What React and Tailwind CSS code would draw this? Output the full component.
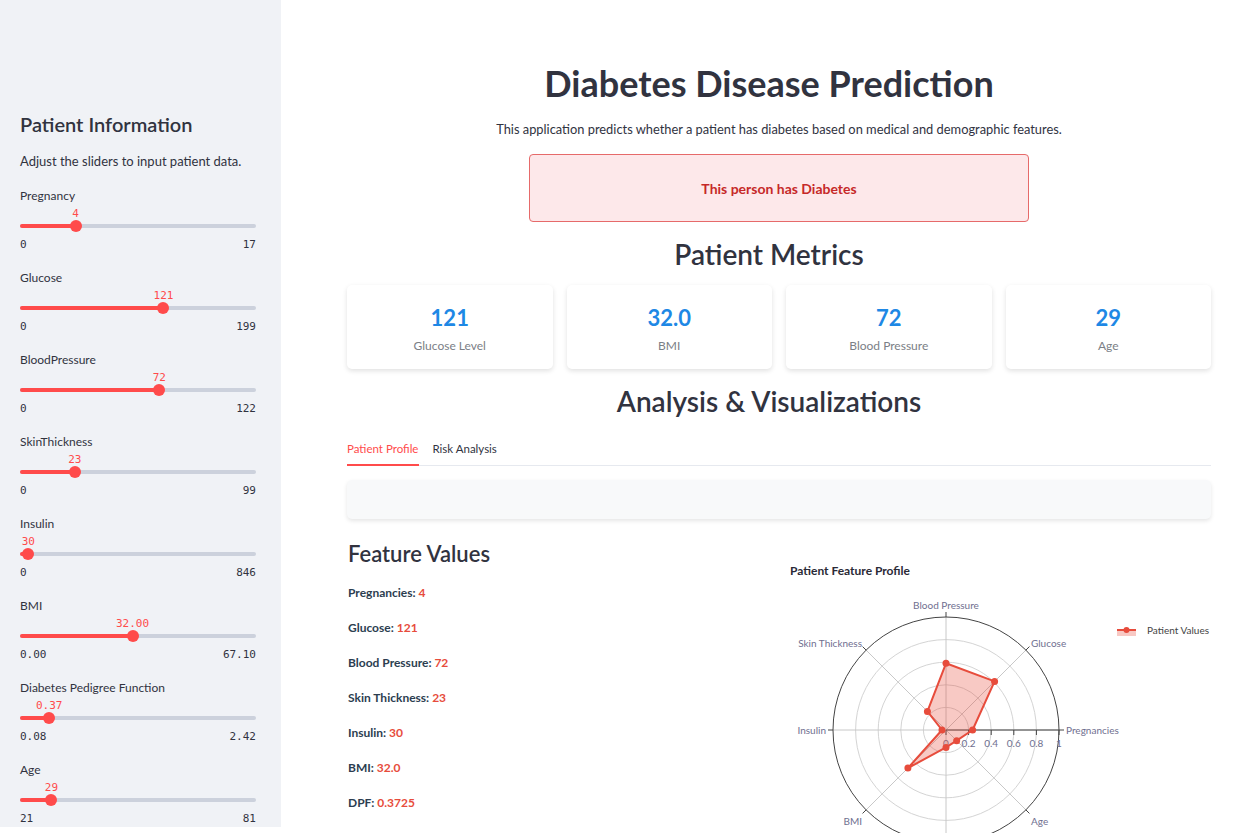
import React from "react";

const sliders = [
  { label: "Pregnancy", value: "4", min: "0", max: "17", pct: 4 / 17 },
  { label: "Glucose", value: "121", min: "0", max: "199", pct: 121 / 199 },
  { label: "BloodPressure", value: "72", min: "0", max: "122", pct: 72 / 122 },
  { label: "SkinThickness", value: "23", min: "0", max: "99", pct: 23 / 99 },
  { label: "Insulin", value: "30", min: "0", max: "846", pct: 30 / 846 },
  { label: "BMI", value: "32.00", min: "0.00", max: "67.10", pct: 32 / 67.1 },
  { label: "Diabetes Pedigree Function", value: "0.37", min: "0.08", max: "2.42", pct: 0.29 / 2.34 },
  { label: "Age", value: "29", min: "21", max: "81", pct: 8 / 60 },
];

const metrics = [
  { value: "121", label: "Glucose Level" },
  { value: "32.0", label: "BMI" },
  { value: "72", label: "Blood Pressure" },
  { value: "29", label: "Age" },
];

const features = [
  ["Pregnancies", "4"],
  ["Glucose", "121"],
  ["Blood Pressure", "72"],
  ["Skin Thickness", "23"],
  ["Insulin", "30"],
  ["BMI", "32.0"],
  ["DPF", "0.3725"],
];

const Slider = ({ label, value, min, max, pct }) => (
  <div className="mb-[16px]">
    <div className="h-[18px] text-[12px] leading-[18px] text-[#31333f]">{label}</div>
    <div className="relative h-[28px]">
      <div
        className="absolute top-[2px] -translate-x-1/2 font-['DejaVu_Sans_Mono',monospace] text-[11px] leading-[14px] text-[#ff4b4b]"
        style={{ left: `${pct * 100}%` }}
      >
        {value}
      </div>
      <div className="absolute left-0 right-0 top-[19px] h-[4px] rounded-full bg-[#ccd1dc]" />
      <div className="absolute left-0 top-[19px] h-[4px] rounded-full bg-[#ff4b4b]" style={{ width: `${pct * 100}%` }} />
      <div
        className="absolute top-[15px] h-[12px] w-[12px] -translate-x-1/2 rounded-full bg-[#ff4b4b]"
        style={{ left: `${pct * 100}%` }}
      />
    </div>
    <div className="mt-[4px] flex h-[16px] justify-between font-['DejaVu_Sans_Mono',monospace] text-[11px] leading-[16px] text-[#31333f]">
      <span>{min}</span>
      <span>{max}</span>
    </div>
  </div>
);

const RadarChart = () => {
  const cx = 160;
  const cy = 170;
  const R = 113;
  const axes = [
    { name: "Pregnancies", v: 4 / 17 },
    { name: "Glucose", v: 121 / 199 },
    { name: "Blood Pressure", v: 72 / 122 },
    { name: "Skin Thickness", v: 23 / 99 },
    { name: "Insulin", v: 30 / 846 },
    { name: "BMI", v: 32 / 67.1 },
    { name: "DPF", v: 0.3725 / 2.42 },
    { name: "Age", v: 8 / 60 },
  ];
  const pt = (i, r) => {
    const a = (i * Math.PI) / 4;
    return [cx + r * Math.cos(a), cy - r * Math.sin(a)];
  };
  const poly = axes.map((ax, i) => pt(i, ax.v * R));
  // DPF label sits below the visible area, so it is left out
  const labels = [
    { name: "Pregnancies", x: cx + R + 7, y: cy + 4, anchor: "start" },
    { name: "Glucose", x: 245, y: 87, anchor: "start" },
    { name: "Blood Pressure", x: cx, y: cy - R - 8, anchor: "middle" },
    { name: "Skin Thickness", x: 76, y: 87, anchor: "end" },
    { name: "Insulin", x: cx - R - 7, y: cy + 4, anchor: "end" },
    { name: "BMI", x: 76, y: 265, anchor: "end" },
    { name: "Age", x: 245, y: 265, anchor: "start" },
  ];

  return (
    <svg width="425" height="273" className="block font-['Lato',sans-serif]">
      <text x="4" y="15" fontSize="12" fontWeight="700" fill="#2a2a36">
        Patient Feature Profile
      </text>
      {[0.2, 0.4, 0.6, 0.8].map((t) => (
        <circle key={t} cx={cx} cy={cy} r={t * R} fill="none" stroke="#d4d4d4" strokeWidth="1" />
      ))}
      {axes.map((ax, i) => {
        const [x, y] = pt(i, R);
        const [tx, ty] = pt(i, R + 5);
        return (
          <g key={ax.name}>
            <line x1={cx} y1={cy} x2={x} y2={y} stroke="#c8c8c8" strokeWidth="1" />
            <line x1={x} y1={y} x2={tx} y2={ty} stroke="#444" strokeWidth="1" />
          </g>
        );
      })}
      <circle cx={cx} cy={cy} r={R} fill="none" stroke="#444" strokeWidth="1" />
      <line x1={cx} y1={cy} x2={cx + R} y2={cy} stroke="#444" strokeWidth="1" />
      {[0, 0.2, 0.4, 0.6, 0.8, 1].map((t) => (
        <g key={t}>
          <line x1={cx + t * R} y1={cy} x2={cx + t * R} y2={cy + 5} stroke="#444" strokeWidth="1" />
          <text x={cx + t * R} y={cy + 17} fontSize="10" textAnchor="middle" fill="#6f6f8f">
            {t}
          </text>
        </g>
      ))}
      <polygon
        points={poly.map((p) => p.join(",")).join(" ")}
        fill="rgba(231,76,60,0.3)"
        stroke="#e74c3c"
        strokeWidth="2"
        strokeLinejoin="round"
      />
      {poly.map(([x, y], i) => (
        <circle key={i} cx={x} cy={y} r="3.5" fill="#e74c3c" />
      ))}
      {labels.map((l) => (
        <text key={l.name} x={l.x} y={l.y} fontSize="10" textAnchor={l.anchor} fill="#6f6f8f">
          {l.name}
        </text>
      ))}
      <rect x="331" y="70" width="19" height="6" fill="rgba(231,76,60,0.3)" />
      <line x1="331" y1="70" x2="350" y2="70" stroke="#e74c3c" strokeWidth="2" />
      <circle cx="340.5" cy="70" r="3" fill="#e74c3c" />
      <text x="361" y="74" fontSize="10" fill="#444">
        Patient Values
      </text>
    </svg>
  );
};

export default function App() {
  return (
    <div className="flex h-[833px] w-[1236px] overflow-hidden bg-white font-['Lato',sans-serif] text-[#31333f]">
      <aside className="h-[827px] w-[281px] shrink-0 bg-[#f0f2f6] pl-[20px] pr-[25px] pt-[111px]">
        <h2 className="text-[20px] font-semibold leading-[26px]">Patient Information</h2>
        <p className="mt-[15px] text-[13px] leading-[18px]">Adjust the sliders to input patient data.</p>
        <div className="mt-[17px]">
          {sliders.map((s) => (
            <Slider key={s.label} {...s} />
          ))}
        </div>
      </aside>

      <main className="flex-1 pl-[66px] pr-[25px] pt-[61px]">
        <div className="w-[864px]">
          <h1 className="pr-[20px] text-center text-[36px] font-bold leading-[44px]">Diabetes Disease Prediction</h1>
          <p className="mt-[15px] text-center text-[12.85px] leading-[18px]">
            This application predicts whether a patient has diabetes based on medical and demographic features.
          </p>
          <div className="mx-auto mt-[16px] flex h-[68px] w-[500px] items-center justify-center rounded-[4px] border-[1.5px] border-[#e66a6a] bg-[#fde8ea]">
            <span className="text-[14px] font-bold text-[#c62828]">This person has Diabetes</span>
          </div>

          <h2 className="mt-[14px] pr-[20px] text-center text-[28px] font-semibold leading-[36px]">Patient Metrics</h2>
          <div className="mt-[13px] grid grid-cols-4 gap-[14px]">
            {metrics.map((m) => (
              <div key={m.label} className="flex h-[84px] flex-col items-center rounded-[5px] bg-white pt-[19px] shadow-[0_2px_5px_rgba(0,0,0,0.12)]">
                <div className="text-[22px] font-bold leading-[28px] text-[#1e88e5]">{m.value}</div>
                <div className="mt-[6px] text-[12px] leading-[16px] text-[#7b8086]">{m.label}</div>
              </div>
            ))}
          </div>

          <h2 className="mt-[14px] pr-[20px] text-center text-[28px] font-semibold leading-[36px]">Analysis &amp; Visualizations</h2>

          <div className="mt-[22px] flex border-b border-[#e6e9ef] text-[11.5px] leading-[16px]">
            <div className="-mb-px border-b-2 border-[#ff4b4b] pb-[7px] pr-[1px] text-[#ff4b4b]">Patient Profile</div>
            <div className="ml-[13px] pb-[7px]">Risk Analysis</div>
          </div>

          <div className="mt-[14px] h-[39px] rounded-[5px] bg-[#f8f9fa] shadow-[0_2px_4px_rgba(0,0,0,0.1)]" />

          <div className="mt-[21px] flex">
            <div className="w-[439px] pl-[1px]">
              <h3 className="text-[22px] font-semibold leading-[28px]">Feature Values</h3>
              <div className="mt-[15px] flex flex-col gap-[16px]">
                {features.map(([k, v]) => (
                  <div key={k} className="text-[12px] font-bold leading-[19px] text-[#2c3e50]">
                    {k}: <span className="text-[#e74c3c]">{v}</span>
                  </div>
                ))}
              </div>
            </div>
            <div className="pt-[20px]">
              <RadarChart />
            </div>
          </div>
        </div>
      </main>
    </div>
  );
}
